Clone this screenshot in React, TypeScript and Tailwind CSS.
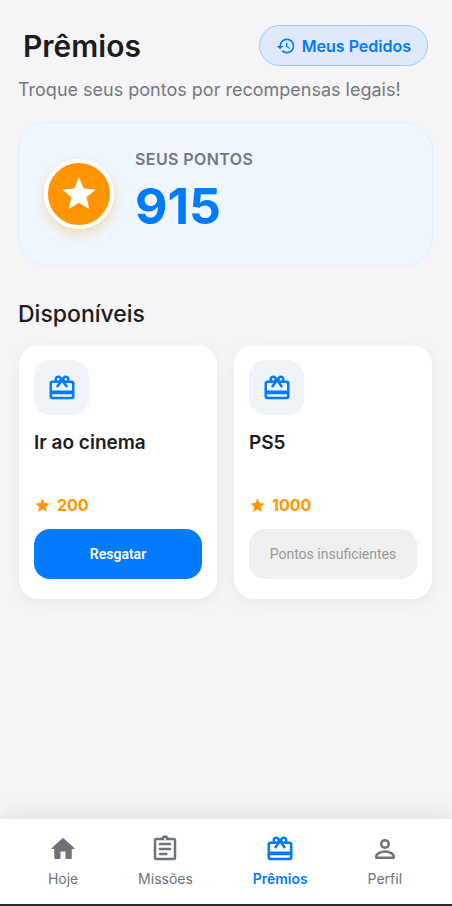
import { MdHistory, MdStar } from 'react-icons/md'

interface Reward {
  id: number
  title: string
  cost: number
}

interface IconProps {
  className?: string
}

const points = 915

const rewards: Reward[] = [
  { id: 1, title: 'Ir ao cinema', cost: 200 },
  { id: 2, title: 'PS5', cost: 1000 },
]

function HomeIcon({ className }: IconProps) {
  return (
    <svg viewBox="0 0 24 24" fill="currentColor" className={className} aria-hidden="true">
      <path d="M10 19v-5h4v5c0 .55.45 1 1 1h3c.55 0 1-.45 1-1v-7h1.7c.46 0 .68-.57.33-.87L12.67 3.6c-.38-.34-.96-.34-1.34 0l-8.36 7.53c-.34.3-.13.87.33.87H5v7c0 .55.45 1 1 1h3c.55 0 1-.45 1-1z" />
    </svg>
  )
}

function MissionsIcon({ className }: IconProps) {
  return (
    <svg viewBox="0 0 24 24" fill="none" stroke="currentColor" strokeWidth="2" strokeLinecap="round" className={className} aria-hidden="true">
      <rect x="4" y="4" width="16" height="16" rx="1" />
      <path d="M8 8h8M8 12h8M8 16h5" />
      <path fill="currentColor" stroke="none" d="M9.18 3a3 3 0 0 1 5.64 0v1.2H9.18z" />
      <circle cx="12" cy="3.9" r=".8" fill="#fff" stroke="none" />
    </svg>
  )
}

function GiftIcon({ className }: IconProps) {
  return (
    <svg viewBox="0 0 24 24" fill="currentColor" className={className} aria-hidden="true">
      <path d="M20 6h-2.18c.11-.31.18-.65.18-1 0-1.66-1.34-3-3-3-1.05 0-1.96.54-2.5 1.35l-.5.67-.5-.68C10.96 2.54 10.05 2 9 2 7.34 2 6 3.34 6 5c0 .35.07.69.18 1H4c-1.11 0-1.99.89-1.99 2L2 19c0 1.11.89 2 2 2h16c1.11 0 2-.89 2-2V8c0-1.11-.89-2-2-2zm-5-2c.55 0 1 .45 1 1s-.45 1-1 1-1-.45-1-1 .45-1 1-1zM9 4c.55 0 1 .45 1 1s-.45 1-1 1-1-.45-1-1 .45-1 1-1zm10 15H5c-.55 0-1-.45-1-1v-1h16v1c0 .55-.45 1-1 1zm1-5H4V9c0-.55.45-1 1-1h4.080L7.6 10.02c-.33.45-.23 1.08.22 1.4.44.32 1.07.22 1.39-.22L12 7.4l2.79 3.8c.32.44.95.54 1.39.22.45-.33.55-.96.22-1.4L14.92 8H19c.55 0 1 .45 1 1v5z" />
    </svg>
  )
}

function ProfileIcon({ className }: IconProps) {
  return (
    <svg viewBox="0 0 24 24" fill="none" stroke="currentColor" strokeWidth="2" strokeLinejoin="round" className={className} aria-hidden="true">
      <circle cx="12" cy="8" r="3" />
      <path d="M5 19v-1c0-2.2 4.2-4 7-4s7 1.8 7 4v1z" />
    </svg>
  )
}

const navItems = [
  { label: 'Hoje', icon: HomeIcon, active: false },
  { label: 'Missões', icon: MissionsIcon, active: false },
  { label: 'Prêmios', icon: GiftIcon, active: true },
  { label: 'Perfil', icon: ProfileIcon, active: false },
]

function RewardCard({ reward }: { reward: Reward }) {
  const canRedeem = points >= reward.cost

  return (
    <article className="flex flex-col rounded-[20px] bg-white px-[15px] pt-[15px] pb-5 shadow-[0_4px_15px_rgba(0,0,0,0.05)]">
      <div className="flex h-[55px] w-[55px] items-center justify-center rounded-2xl bg-[#f0f4f8]">
        <GiftIcon className="h-[30px] w-[30px] text-[#007aff]" />
      </div>
      <h3 className="mt-4 min-h-12 text-[19px] leading-6 font-semibold text-[#1c1c1e]">{reward.title}</h3>
      <p className="mt-3.5 flex items-center gap-1.5 text-base leading-6 font-bold text-[#ff9500]">
        <MdStar className="h-[17px] w-[17px]" />
        {reward.cost}
      </p>
      <button
        disabled={!canRedeem}
        className={`mt-3 h-[50px] rounded-2xl font-[Roboto,sans-serif] text-sm ${
          canRedeem ? 'bg-[#007aff] font-semibold text-white' : 'bg-[#efefef] font-normal text-[#999999]'
        }`}
      >
        {canRedeem ? 'Resgatar' : 'Pontos insuficientes'}
      </button>
    </article>
  )
}

export default function App() {
  return (
    <div className="flex min-h-screen flex-col bg-[#f5f5f8] font-[Inter,sans-serif] text-[#1c1c1e]">
      <main className="flex-1 pt-[25px] pr-[19px] pb-8 pl-[18px]">
        <header className="flex items-center justify-between px-[5px]">
          <h1 className="text-3xl leading-10 font-semibold">Prêmios</h1>
          <button className="flex h-[41px] items-center gap-1.5 rounded-full border border-[#99caff] bg-[#dfe9f9] px-4 text-base leading-5 font-semibold text-[#007aff]">
            <MdHistory className="h-5 w-5" />
            Meus Pedidos
          </button>
        </header>
        <p className="mt-3 text-lg leading-6 text-[#757780]">Troque seus pontos por recompensas legais!</p>

        <section className="mt-5 flex h-36 items-center gap-[21px] rounded-[28px] border border-[#e0f0ff] bg-[#eef7ff] px-[25px]">
          <div className="flex h-[70px] w-[70px] shrink-0 items-center justify-center rounded-full border-4 border-white bg-[#ff9500] shadow-[0_5px_12px_rgba(255,149,0,0.3)]">
            <MdStar className="h-10 w-10 text-white" />
          </div>
          <div>
            <p className="text-base leading-6 font-semibold tracking-wide text-[#757780]">SEUS PONTOS</p>
            <p className="text-[50px] leading-[70px] font-bold text-[#007aff]">{points}</p>
          </div>
        </section>

        <h2 className="mt-8 text-[23px] leading-8 font-medium">Disponíveis</h2>
        <div className="mt-[15px] grid grid-cols-2 gap-[17px] px-px">
          {rewards.map((reward) => <RewardCard key={reward.id} reward={reward} />)}
        </div>
      </main>

      <nav className="sticky bottom-0 flex h-[87px] justify-around border-b-2 border-[#2b2b2d] bg-white pt-[15px] pr-5 pl-[18px] shadow-[0_-5px_20px_rgba(0,0,0,0.08)]">
        {navItems.map(({ label, icon: Icon, active }) => (
          <a
            key={label}
            href="#"
            aria-current={active ? 'page' : undefined}
            className={`flex flex-col items-center text-sm leading-5 ${active ? 'font-semibold text-[#007aff]' : 'text-[#6e727d]'}`}
          >
            <Icon className="mb-[5px] h-[30px] w-[30px]" />
            {label}
          </a>
        ))}
      </nav>
    </div>
  )
}
